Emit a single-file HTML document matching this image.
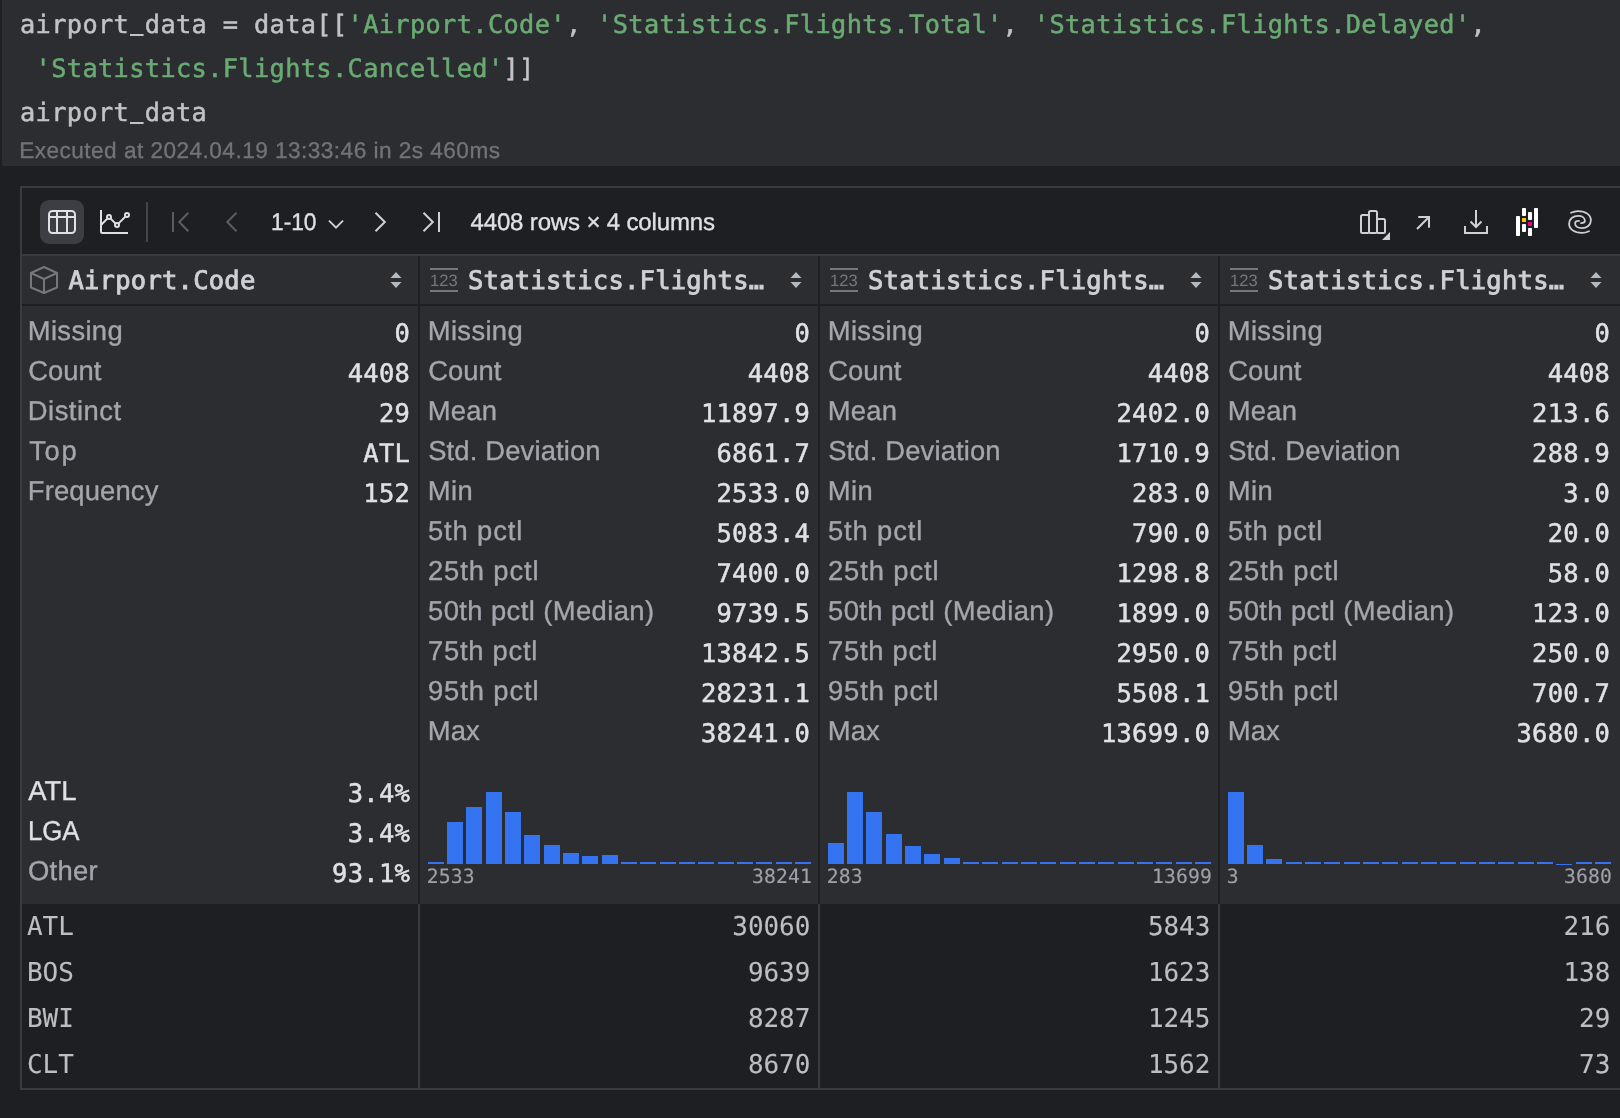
<!DOCTYPE html>
<html lang="en"><head><meta charset="utf-8"><title>airport_data</title>
<style>
*{box-sizing:border-box;margin:0;padding:0}
html,body{width:1620px;height:1118px;overflow:hidden;background:#1e1f22}
body{position:relative;font-family:"Liberation Sans", "DejaVu Sans", sans-serif;color:#dfe1e5;text-rendering:geometricPrecision}
#root{position:absolute;left:0;top:0;width:1620px;height:1118px;overflow:hidden;will-change:transform}
.a{position:absolute;white-space:pre}
.m{font-family:"DejaVu Sans Mono", "Liberation Mono", monospace;font-size:26px;letter-spacing:-0.056px;-webkit-text-stroke:0.5px currentColor}
.s{font-family:"Liberation Sans", "DejaVu Sans", sans-serif;-webkit-text-stroke:0.35px currentColor}
.code{left:20px;height:44px;line-height:44px;color:#c1c3c9;font-size:25.300px;letter-spacing:0.366px}
.us{color:transparent;-webkit-text-stroke:0;background:linear-gradient(#c1c3c9,#c1c3c9) no-repeat 1px 23.8px/13.6px 2.4px}
.str{color:#6aab73}
.h{height:40px;line-height:40px;color:#ced0d6;font-size:25.5px;letter-spacing:0.245px;-webkit-text-stroke:0.9px currentColor}
.lab{height:40px;line-height:40px;font-size:27px;color:#a4a6ad}
.val{height:40px;line-height:40px;color:#dfe1e5;text-align:right;width:200px;font-size:25.5px;letter-spacing:0.245px}
.cat{color:#dfe1e5}
.ax{font-size:19.700px;letter-spacing:0.138px;height:24px;line-height:24px;color:#9da0a8;-webkit-text-stroke:0.15px currentColor}
.r{text-align:right;width:200px}
.ns{-webkit-text-stroke:0}
.cell{height:46px;line-height:46px;color:#bcbec4;-webkit-text-stroke:0.1px currentColor}
.bar{position:absolute;background:#3574f0}
svg{position:absolute;left:0;top:0;overflow:visible}
</style></head>
<body><div id="root">
<div class="a" style="left:2px;top:0px;width:1618px;height:166px;background:#2b2d30"></div>
<div class="a" style="left:20px;top:186px;width:1600px;height:904px;background:#393b40"></div>
<div class="a" style="left:22px;top:188px;width:1598px;height:66px;background:#1e1f22"></div>
<div class="a" style="left:22px;top:254px;width:1598px;height:2px;background:#393b40"></div>
<div class="a" style="left:22px;top:256px;width:1598px;height:48px;background:#2b2d30"></div>
<div class="a" style="left:22px;top:304px;width:1598px;height:2px;background:#1e1f22"></div>
<div class="a" style="left:22px;top:306px;width:1598px;height:598px;background:#2b2d30"></div>
<div class="a" style="left:22px;top:904px;width:1598px;height:184px;background:#1e1f22"></div>
<div class="a" style="left:418px;top:256px;width:2px;height:648px;background:#1e1f22"></div>
<div class="a" style="left:418px;top:904px;width:2px;height:184px;background:#393b40"></div>
<div class="a" style="left:818px;top:256px;width:2px;height:648px;background:#1e1f22"></div>
<div class="a" style="left:818px;top:904px;width:2px;height:184px;background:#393b40"></div>
<div class="a" style="left:1218px;top:256px;width:2px;height:648px;background:#1e1f22"></div>
<div class="a" style="left:1218px;top:904px;width:2px;height:184px;background:#393b40"></div>
<div class="a m code" style="top:3px">airport<span class="us">_</span>data = data[[<span class="str">'Airport.Code'</span>, <span class="str">'Statistics.Flights.Total'</span>, <span class="str">'Statistics.Flights.Delayed'</span>,</div>
<div class="a m code" style="top:47px"> <span class="str">'Statistics.Flights.Cancelled'</span>]]</div>
<div class="a m code" style="top:91px">airport<span class="us">_</span>data</div>
<div class="a s " style="left:19.20px;top:137px;height:28px;line-height:28px;font-size:22.6px;letter-spacing:0.471px;color:#727379">Executed at 2024.04.19 13:33:46 in 2s 460ms</div>
<div class="a" style="left:40px;top:200px;width:44px;height:44px;background:#3c3e43;border-radius:9px"></div>
<div class="a s " style="left:270.71px;top:209px;height:28px;line-height:28px;font-size:24px;letter-spacing:0.000px;color:#dfe1e5;transform-origin:0 50%;transform:scaleX(0.9467)">1-10</div>
<div class="a s " style="left:470.50px;top:209px;height:28px;line-height:28px;font-size:24px;letter-spacing:-0.150px;color:#dfe1e5">4408 rows × 4 columns</div>
<div class="a" style="left:146px;top:202px;width:2px;height:40px;background:#43454a"></div>
<svg width="1620" height="1118" viewBox="0 0 1620 1118" fill="none" stroke-width="2"><g stroke="#dfe1e5"><rect x="49" y="211" width="26" height="22" rx="3.500"/><path d="M49 217H75M57 211V233M67 211V233"/></g><g stroke="#dfe1e5"><path d="M101 210V231.500Q101 233 102.500 233H128" stroke-linejoin="round"/><path d="M101.500 224.500L107.600 218.400M110.400 218.400L115.600 223.600M118.400 223.600L125.600 216.400"/><circle cx="109" cy="217" r="2"/><circle cx="117" cy="225" r="2"/><circle cx="127" cy="215" r="2"/></g><g stroke="#5a5d63"><path d="M173 212V232M188.300 212.700L179.300 222L188.300 231.300"/><path d="M236.500 212.700L227.300 222L236.500 231.300"/></g><g stroke="#ced0d6"><path d="M329 220.600L336 227.600L343 220.600"/><path d="M375.500 212.700L384.800 222L375.500 231.300"/><path d="M423.500 212.700L432.800 222L423.500 231.300M439 212V232"/></g><g stroke="#ced0d6"><rect x="1361" y="215" width="8" height="18" rx="1.500"/><rect x="1369" y="211" width="8" height="22" rx="1.500"/><rect x="1377" y="219" width="8" height="14" rx="1.500"/><path d="M1390 232V240H1382Z" fill="#ced0d6" stroke="none"/></g><g stroke="#ced0d6"><path d="M1418.300 217H1429V227.700M1429 217L1417 229"/></g><g stroke="#ced0d6"><path d="M1465 226V233H1487V226M1476 210V226.500M1470.500 221.500L1476 227L1481.500 221.500"/></g><g stroke="none"><rect x="1516" y="216" width="4" height="20" rx="0.800" fill="#fff"/><rect x="1522" y="208" width="4" height="8" rx="0.800" fill="#fff"/><rect x="1522" y="218" width="4" height="4" rx="0.600" fill="#ffca00"/><rect x="1522" y="224" width="4" height="8" rx="0.800" fill="#fff"/><rect x="1528" y="212" width="4" height="8" rx="0.800" fill="#fff"/><rect x="1528" y="222" width="4" height="4" rx="0.600" fill="#e70488"/><rect x="1528" y="228" width="4" height="8" rx="0.800" fill="#fff"/><rect x="1534" y="208" width="4" height="20" rx="0.800" fill="#fff"/></g><g stroke="#ced0d6" stroke-linecap="round" stroke-width="1.800"><path d="M1571 212.700C1573.500 211.600 1575.800 211.100 1578 211.100C1585.500 211.100 1590.900 214.800 1590.900 220.300C1590.900 225 1587 228.100 1581.700 228.100C1578 228.100 1575.100 226.300 1575.100 223.200C1575.100 221.800 1576.200 220.900 1579 220.900"/><path d="M1571 212.700C1573.500 211.600 1575.800 211.100 1578 211.100C1585.500 211.100 1590.900 214.800 1590.900 220.300C1590.900 225 1587 228.100 1581.700 228.100C1578 228.100 1575.100 226.300 1575.100 223.200C1575.100 221.800 1576.200 220.900 1579 220.900" transform="rotate(180 1580 222)"/></g><g stroke="#75777d" stroke-linejoin="round"><path d="M44 267L57 273V287.500L44 293L31 287.500V273ZM31 273L44 279L57 273M44 279V293"/></g><path d="M430 269H458M430 291H458" stroke="#75777d"/><path d="M830 269H858M830 291H858" stroke="#75777d"/><path d="M1230 269H1258M1230 291H1258" stroke="#75777d"/><path d="M396 272L401.5 278H390.5ZM396 288L401.5 282H390.5Z" fill="#b4b8bf" stroke="none"/><path d="M796 272L801.5 278H790.5ZM796 288L801.5 282H790.5Z" fill="#b4b8bf" stroke="none"/><path d="M1196 272L1201.5 278H1190.5ZM1196 288L1201.5 282H1190.5Z" fill="#b4b8bf" stroke="none"/><path d="M1596 272L1601.5 278H1590.5ZM1596 288L1601.5 282H1590.5Z" fill="#b4b8bf" stroke="none"/></svg>
<div class="a m h" style="left:68.400px;top:261px">Airport.Code</div>
<div class="a s ns" style="left:429.90px;top:271.3px;height:20px;line-height:20px;font-size:16.5px;letter-spacing:0.150px;color:#75777d">123</div>
<div class="a m h" style="left:468px;top:261px">Statistics.Flights…</div>
<div class="a s ns" style="left:829.90px;top:271.3px;height:20px;line-height:20px;font-size:16.5px;letter-spacing:0.150px;color:#75777d">123</div>
<div class="a m h" style="left:868px;top:261px">Statistics.Flights…</div>
<div class="a s ns" style="left:1229.90px;top:271.3px;height:20px;line-height:20px;font-size:16.5px;letter-spacing:0.150px;color:#75777d">123</div>
<div class="a m h" style="left:1268px;top:261px">Statistics.Flights…</div>
<div class="a s lab" style="left:27.80px;top:311px;height:40px;line-height:40px;font-size:27.4px;letter-spacing:0.333px">Missing</div>
<div class="a m val" style="left:210.1px;top:314px">0</div>
<div class="a s lab" style="left:28.20px;top:351px;height:40px;line-height:40px;font-size:27.4px;letter-spacing:0.025px">Count</div>
<div class="a m val" style="left:210.1px;top:354px">4408</div>
<div class="a s lab" style="left:27.80px;top:391px;height:40px;line-height:40px;font-size:27.4px;letter-spacing:0.486px">Distinct</div>
<div class="a m val" style="left:210.1px;top:394px">29</div>
<div class="a s lab" style="left:29.20px;top:431px;height:40px;line-height:40px;font-size:27.4px;letter-spacing:1.650px">Top</div>
<div class="a m val" style="left:210.1px;top:434px">ATL</div>
<div class="a s lab" style="left:27.80px;top:471px;height:40px;line-height:40px;font-size:27.4px;letter-spacing:0.150px">Frequency</div>
<div class="a m val" style="left:210.1px;top:474px">152</div>
<div class="a s lab" style="left:427.80px;top:311px;height:40px;line-height:40px;font-size:27.4px;letter-spacing:0.333px">Missing</div>
<div class="a m val" style="left:610.1px;top:314px">0</div>
<div class="a s lab" style="left:428.20px;top:351px;height:40px;line-height:40px;font-size:27.4px;letter-spacing:0.025px">Count</div>
<div class="a m val" style="left:610.1px;top:354px">4408</div>
<div class="a s lab" style="left:427.80px;top:391px;height:40px;line-height:40px;font-size:27.4px;letter-spacing:0.200px">Mean</div>
<div class="a m val" style="left:610.1px;top:394px">11897.9</div>
<div class="a s lab" style="left:428.20px;top:431px;height:40px;line-height:40px;font-size:27.4px;letter-spacing:0.146px">Std. Deviation</div>
<div class="a m val" style="left:610.1px;top:434px">6861.7</div>
<div class="a s lab" style="left:427.80px;top:471px;height:40px;line-height:40px;font-size:27.4px;letter-spacing:0.400px">Min</div>
<div class="a m val" style="left:610.1px;top:474px">2533.0</div>
<div class="a s lab" style="left:428.00px;top:511px;height:40px;line-height:40px;font-size:27.4px;letter-spacing:0.843px">5th pctl</div>
<div class="a m val" style="left:610.1px;top:514px">5083.4</div>
<div class="a s lab" style="left:428.00px;top:551px;height:40px;line-height:40px;font-size:27.4px;letter-spacing:0.875px">25th pctl</div>
<div class="a m val" style="left:610.1px;top:554px">7400.0</div>
<div class="a s lab" style="left:428.00px;top:591px;height:40px;line-height:40px;font-size:27.4px;letter-spacing:0.406px">50th pctl (Median)</div>
<div class="a m val" style="left:610.1px;top:594px">9739.5</div>
<div class="a s lab" style="left:428.00px;top:631px;height:40px;line-height:40px;font-size:27.4px;letter-spacing:0.737px">75th pctl</div>
<div class="a m val" style="left:610.1px;top:634px">13842.5</div>
<div class="a s lab" style="left:428.00px;top:671px;height:40px;line-height:40px;font-size:27.4px;letter-spacing:0.875px">95th pctl</div>
<div class="a m val" style="left:610.1px;top:674px">28231.1</div>
<div class="a s lab" style="left:427.80px;top:711px;height:40px;line-height:40px;font-size:27.4px;letter-spacing:0.100px">Max</div>
<div class="a m val" style="left:610.1px;top:714px">38241.0</div>
<div class="a s lab" style="left:827.80px;top:311px;height:40px;line-height:40px;font-size:27.4px;letter-spacing:0.333px">Missing</div>
<div class="a m val" style="left:1010.1px;top:314px">0</div>
<div class="a s lab" style="left:828.20px;top:351px;height:40px;line-height:40px;font-size:27.4px;letter-spacing:0.025px">Count</div>
<div class="a m val" style="left:1010.1px;top:354px">4408</div>
<div class="a s lab" style="left:827.80px;top:391px;height:40px;line-height:40px;font-size:27.4px;letter-spacing:0.200px">Mean</div>
<div class="a m val" style="left:1010.1px;top:394px">2402.0</div>
<div class="a s lab" style="left:828.20px;top:431px;height:40px;line-height:40px;font-size:27.4px;letter-spacing:0.146px">Std. Deviation</div>
<div class="a m val" style="left:1010.1px;top:434px">1710.9</div>
<div class="a s lab" style="left:827.80px;top:471px;height:40px;line-height:40px;font-size:27.4px;letter-spacing:0.400px">Min</div>
<div class="a m val" style="left:1010.1px;top:474px">283.0</div>
<div class="a s lab" style="left:828.00px;top:511px;height:40px;line-height:40px;font-size:27.4px;letter-spacing:0.843px">5th pctl</div>
<div class="a m val" style="left:1010.1px;top:514px">790.0</div>
<div class="a s lab" style="left:828.00px;top:551px;height:40px;line-height:40px;font-size:27.4px;letter-spacing:0.875px">25th pctl</div>
<div class="a m val" style="left:1010.1px;top:554px">1298.8</div>
<div class="a s lab" style="left:828.00px;top:591px;height:40px;line-height:40px;font-size:27.4px;letter-spacing:0.406px">50th pctl (Median)</div>
<div class="a m val" style="left:1010.1px;top:594px">1899.0</div>
<div class="a s lab" style="left:828.00px;top:631px;height:40px;line-height:40px;font-size:27.4px;letter-spacing:0.737px">75th pctl</div>
<div class="a m val" style="left:1010.1px;top:634px">2950.0</div>
<div class="a s lab" style="left:828.00px;top:671px;height:40px;line-height:40px;font-size:27.4px;letter-spacing:0.875px">95th pctl</div>
<div class="a m val" style="left:1010.1px;top:674px">5508.1</div>
<div class="a s lab" style="left:827.80px;top:711px;height:40px;line-height:40px;font-size:27.4px;letter-spacing:0.100px">Max</div>
<div class="a m val" style="left:1010.1px;top:714px">13699.0</div>
<div class="a s lab" style="left:1227.80px;top:311px;height:40px;line-height:40px;font-size:27.4px;letter-spacing:0.333px">Missing</div>
<div class="a m val" style="left:1410.1px;top:314px">0</div>
<div class="a s lab" style="left:1228.20px;top:351px;height:40px;line-height:40px;font-size:27.4px;letter-spacing:0.025px">Count</div>
<div class="a m val" style="left:1410.1px;top:354px">4408</div>
<div class="a s lab" style="left:1227.80px;top:391px;height:40px;line-height:40px;font-size:27.4px;letter-spacing:0.200px">Mean</div>
<div class="a m val" style="left:1410.1px;top:394px">213.6</div>
<div class="a s lab" style="left:1228.20px;top:431px;height:40px;line-height:40px;font-size:27.4px;letter-spacing:0.146px">Std. Deviation</div>
<div class="a m val" style="left:1410.1px;top:434px">288.9</div>
<div class="a s lab" style="left:1227.80px;top:471px;height:40px;line-height:40px;font-size:27.4px;letter-spacing:0.400px">Min</div>
<div class="a m val" style="left:1410.1px;top:474px">3.0</div>
<div class="a s lab" style="left:1228.00px;top:511px;height:40px;line-height:40px;font-size:27.4px;letter-spacing:0.843px">5th pctl</div>
<div class="a m val" style="left:1410.1px;top:514px">20.0</div>
<div class="a s lab" style="left:1228.00px;top:551px;height:40px;line-height:40px;font-size:27.4px;letter-spacing:0.875px">25th pctl</div>
<div class="a m val" style="left:1410.1px;top:554px">58.0</div>
<div class="a s lab" style="left:1228.00px;top:591px;height:40px;line-height:40px;font-size:27.4px;letter-spacing:0.406px">50th pctl (Median)</div>
<div class="a m val" style="left:1410.1px;top:594px">123.0</div>
<div class="a s lab" style="left:1228.00px;top:631px;height:40px;line-height:40px;font-size:27.4px;letter-spacing:0.738px">75th pctl</div>
<div class="a m val" style="left:1410.1px;top:634px">250.0</div>
<div class="a s lab" style="left:1228.00px;top:671px;height:40px;line-height:40px;font-size:27.4px;letter-spacing:0.875px">95th pctl</div>
<div class="a m val" style="left:1410.1px;top:674px">700.7</div>
<div class="a s lab" style="left:1227.80px;top:711px;height:40px;line-height:40px;font-size:27.4px;letter-spacing:0.100px">Max</div>
<div class="a m val" style="left:1410.1px;top:714px">3680.0</div>
<div class="a s lab" style="left:28.30px;top:771px;height:40px;line-height:40px;font-size:27.4px;letter-spacing:0.000px;color:#dfe1e5">ATL</div>
<div class="a m val" style="left:210.1px;top:774px">3.4%</div>
<div class="a s lab" style="left:27.72px;top:811px;height:40px;line-height:40px;font-size:27.4px;letter-spacing:0.000px;color:#dfe1e5;transform-origin:0 50%;transform:scaleX(0.9396)">LGA</div>
<div class="a m val" style="left:210.1px;top:814px">3.4%</div>
<div class="a s lab" style="left:27.90px;top:851px;height:40px;line-height:40px;font-size:27.4px;letter-spacing:0.300px">Other</div>
<div class="a m val" style="left:210.1px;top:854px">93.1%</div>
<div class="bar" style="left:427.50px;top:861.7px;width:16px;height:2.7px"></div>
<div class="bar" style="left:446.84px;top:822.4px;width:16px;height:42.0px"></div>
<div class="bar" style="left:466.18px;top:806.6px;width:16px;height:57.8px"></div>
<div class="bar" style="left:485.52px;top:791.9px;width:16px;height:72.5px"></div>
<div class="bar" style="left:504.86px;top:811.8px;width:16px;height:52.6px"></div>
<div class="bar" style="left:524.20px;top:834.8px;width:16px;height:29.6px"></div>
<div class="bar" style="left:543.54px;top:845.0px;width:16px;height:19.4px"></div>
<div class="bar" style="left:562.88px;top:852.7px;width:16px;height:11.7px"></div>
<div class="bar" style="left:582.22px;top:856.4px;width:16px;height:8.0px"></div>
<div class="bar" style="left:601.56px;top:854.8px;width:16px;height:9.6px"></div>
<div class="bar" style="left:620.90px;top:861.7px;width:16px;height:2.7px"></div>
<div class="bar" style="left:640.24px;top:861.7px;width:16px;height:2.7px"></div>
<div class="bar" style="left:659.58px;top:861.7px;width:16px;height:2.7px"></div>
<div class="bar" style="left:678.92px;top:861.7px;width:16px;height:2.7px"></div>
<div class="bar" style="left:698.26px;top:861.7px;width:16px;height:2.7px"></div>
<div class="bar" style="left:717.60px;top:861.7px;width:16px;height:2.7px"></div>
<div class="bar" style="left:736.94px;top:861.7px;width:16px;height:2.7px"></div>
<div class="bar" style="left:756.28px;top:861.7px;width:16px;height:2.7px"></div>
<div class="bar" style="left:775.62px;top:861.7px;width:16px;height:2.7px"></div>
<div class="bar" style="left:794.96px;top:861.7px;width:16px;height:2.7px"></div>
<div class="a m ax" style="left:426.7px;top:865px">2533</div>
<div class="a m ax r" style="left:611.9px;top:865px">38241</div>
<div class="bar" style="left:827.50px;top:843.1px;width:16px;height:21.3px"></div>
<div class="bar" style="left:846.84px;top:791.9px;width:16px;height:72.5px"></div>
<div class="bar" style="left:866.18px;top:811.8px;width:16px;height:52.6px"></div>
<div class="bar" style="left:885.52px;top:834.4px;width:16px;height:30.0px"></div>
<div class="bar" style="left:904.86px;top:845.7px;width:16px;height:18.7px"></div>
<div class="bar" style="left:924.20px;top:854.4px;width:16px;height:10.0px"></div>
<div class="bar" style="left:943.54px;top:857.9px;width:16px;height:6.5px"></div>
<div class="bar" style="left:962.88px;top:861.7px;width:16px;height:2.7px"></div>
<div class="bar" style="left:982.22px;top:861.7px;width:16px;height:2.7px"></div>
<div class="bar" style="left:1001.56px;top:861.7px;width:16px;height:2.7px"></div>
<div class="bar" style="left:1020.90px;top:861.7px;width:16px;height:2.7px"></div>
<div class="bar" style="left:1040.24px;top:861.7px;width:16px;height:2.7px"></div>
<div class="bar" style="left:1059.58px;top:861.7px;width:16px;height:2.7px"></div>
<div class="bar" style="left:1078.92px;top:861.7px;width:16px;height:2.7px"></div>
<div class="bar" style="left:1098.26px;top:861.7px;width:16px;height:2.7px"></div>
<div class="bar" style="left:1117.60px;top:861.7px;width:16px;height:2.7px"></div>
<div class="bar" style="left:1136.94px;top:861.7px;width:16px;height:2.7px"></div>
<div class="bar" style="left:1156.28px;top:861.7px;width:16px;height:2.7px"></div>
<div class="bar" style="left:1175.62px;top:861.7px;width:16px;height:2.7px"></div>
<div class="bar" style="left:1194.96px;top:861.7px;width:16px;height:2.7px"></div>
<div class="a m ax" style="left:826.7px;top:865px">283</div>
<div class="a m ax r" style="left:1011.9px;top:865px">13699</div>
<div class="bar" style="left:1227.50px;top:791.9px;width:16px;height:72.5px"></div>
<div class="bar" style="left:1246.84px;top:845.0px;width:16px;height:19.4px"></div>
<div class="bar" style="left:1266.18px;top:859.2px;width:16px;height:5.2px"></div>
<div class="bar" style="left:1285.52px;top:861.7px;width:16px;height:2.7px"></div>
<div class="bar" style="left:1304.86px;top:861.7px;width:16px;height:2.7px"></div>
<div class="bar" style="left:1324.20px;top:861.7px;width:16px;height:2.7px"></div>
<div class="bar" style="left:1343.54px;top:861.7px;width:16px;height:2.7px"></div>
<div class="bar" style="left:1362.88px;top:861.7px;width:16px;height:2.7px"></div>
<div class="bar" style="left:1382.22px;top:861.7px;width:16px;height:2.7px"></div>
<div class="bar" style="left:1401.56px;top:861.7px;width:16px;height:2.7px"></div>
<div class="bar" style="left:1420.90px;top:861.7px;width:16px;height:2.7px"></div>
<div class="bar" style="left:1440.24px;top:861.7px;width:16px;height:2.7px"></div>
<div class="bar" style="left:1459.58px;top:861.7px;width:16px;height:2.7px"></div>
<div class="bar" style="left:1478.92px;top:861.7px;width:16px;height:2.7px"></div>
<div class="bar" style="left:1498.26px;top:861.7px;width:16px;height:2.7px"></div>
<div class="bar" style="left:1517.60px;top:861.7px;width:16px;height:2.7px"></div>
<div class="bar" style="left:1536.94px;top:861.7px;width:16px;height:2.7px"></div>
<div class="bar" style="left:1556.28px;top:863.8px;width:16px;height:0.6px"></div>
<div class="bar" style="left:1575.62px;top:861.7px;width:16px;height:2.7px"></div>
<div class="bar" style="left:1594.96px;top:861.7px;width:16px;height:2.7px"></div>
<div class="a m ax" style="left:1226.7px;top:865px">3</div>
<div class="a m ax r" style="left:1411.9px;top:865px">3680</div>
<div class="a m cell" style="left:27px;top:904px">ATL</div>
<div class="a m cell r" style="left:610.3px;top:904px">30060</div>
<div class="a m cell r" style="left:1010.3px;top:904px">5843</div>
<div class="a m cell r" style="left:1410.3px;top:904px">216</div>
<div class="a m cell" style="left:27px;top:950px">BOS</div>
<div class="a m cell r" style="left:610.3px;top:950px">9639</div>
<div class="a m cell r" style="left:1010.3px;top:950px">1623</div>
<div class="a m cell r" style="left:1410.3px;top:950px">138</div>
<div class="a m cell" style="left:27px;top:996px">BWI</div>
<div class="a m cell r" style="left:610.3px;top:996px">8287</div>
<div class="a m cell r" style="left:1010.3px;top:996px">1245</div>
<div class="a m cell r" style="left:1410.3px;top:996px">29</div>
<div class="a m cell" style="left:27px;top:1042px">CLT</div>
<div class="a m cell r" style="left:610.3px;top:1042px">8670</div>
<div class="a m cell r" style="left:1010.3px;top:1042px">1562</div>
<div class="a m cell r" style="left:1410.3px;top:1042px">73</div>
</div></body></html>
